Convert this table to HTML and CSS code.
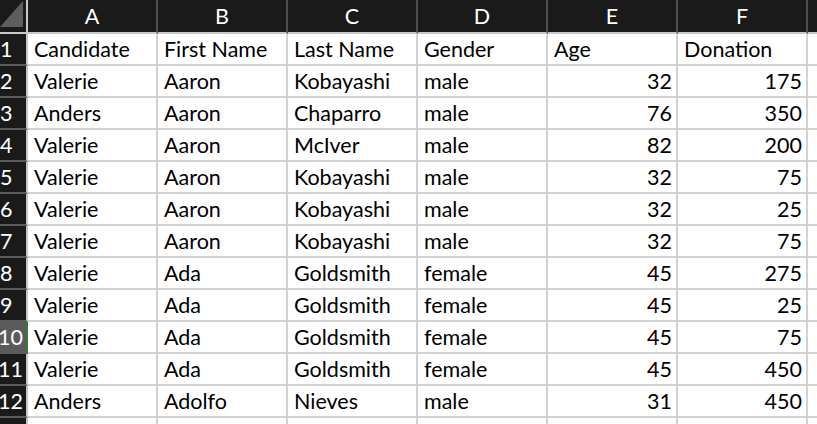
FILE: index.html
```html
<!DOCTYPE html>
<html>
<head>
<meta charset="utf-8">
<link rel="stylesheet" href="styles.css">
</head>
<body>
<div class="sheet">
  <div class="row head">
    <div class="corner"><svg width="26" height="32" viewBox="0 0 26 32"><polygon points="0,27 23,1 23,27" fill="#5e5e5e"/></svg></div>
    <div class="ch">A</div><div class="ch">B</div><div class="ch">C</div><div class="ch">D</div><div class="ch">E</div><div class="ch">F</div><div class="ch last"></div>
  </div>
  <div class="row"><div class="rh">1</div><div class="c">Candidate</div><div class="c">First Name</div><div class="c">Last Name</div><div class="c">Gender</div><div class="c">Age</div><div class="c">Donation</div><div class="c"></div></div>
  <div class="row"><div class="rh">2</div><div class="c">Valerie</div><div class="c">Aaron</div><div class="c">Kobayashi</div><div class="c">male</div><div class="c n">32</div><div class="c n">175</div><div class="c"></div></div>
  <div class="row"><div class="rh">3</div><div class="c">Anders</div><div class="c">Aaron</div><div class="c">Chaparro</div><div class="c">male</div><div class="c n">76</div><div class="c n">350</div><div class="c"></div></div>
  <div class="row"><div class="rh">4</div><div class="c">Valerie</div><div class="c">Aaron</div><div class="c">McIver</div><div class="c">male</div><div class="c n">82</div><div class="c n">200</div><div class="c"></div></div>
  <div class="row"><div class="rh">5</div><div class="c">Valerie</div><div class="c">Aaron</div><div class="c">Kobayashi</div><div class="c">male</div><div class="c n">32</div><div class="c n">75</div><div class="c"></div></div>
  <div class="row"><div class="rh">6</div><div class="c">Valerie</div><div class="c">Aaron</div><div class="c">Kobayashi</div><div class="c">male</div><div class="c n">32</div><div class="c n">25</div><div class="c"></div></div>
  <div class="row"><div class="rh">7</div><div class="c">Valerie</div><div class="c">Aaron</div><div class="c">Kobayashi</div><div class="c">male</div><div class="c n">32</div><div class="c n">75</div><div class="c"></div></div>
  <div class="row"><div class="rh">8</div><div class="c">Valerie</div><div class="c">Ada</div><div class="c">Goldsmith</div><div class="c">female</div><div class="c n">45</div><div class="c n">275</div><div class="c"></div></div>
  <div class="row"><div class="rh">9</div><div class="c">Valerie</div><div class="c">Ada</div><div class="c">Goldsmith</div><div class="c">female</div><div class="c n">45</div><div class="c n">25</div><div class="c"></div></div>
  <div class="row"><div class="rh two sel">10</div><div class="c">Valerie</div><div class="c">Ada</div><div class="c">Goldsmith</div><div class="c">female</div><div class="c n">45</div><div class="c n">75</div><div class="c"></div></div>
  <div class="row"><div class="rh two">11</div><div class="c">Valerie</div><div class="c">Ada</div><div class="c">Goldsmith</div><div class="c">female</div><div class="c n">45</div><div class="c n">450</div><div class="c"></div></div>
  <div class="row"><div class="rh two">12</div><div class="c">Anders</div><div class="c">Adolfo</div><div class="c">Nieves</div><div class="c">male</div><div class="c n">31</div><div class="c n">450</div><div class="c"></div></div>
  <div class="row"><div class="rh two">13</div><div class="c"></div><div class="c"></div><div class="c"></div><div class="c"></div><div class="c n"></div><div class="c n"></div><div class="c"></div></div>
</div>
</body>
</html>
```
FILE: styles.css
```css
html, body {
  margin: 0;
  padding: 0;
  background: #ffffff;
  overflow: hidden;
}
.sheet {
  width: 817px;
  height: 424px;
  overflow: hidden;
  font-family: Lato, "Liberation Sans", sans-serif;
  font-size: 21.5px;
}
.row {
  display: grid;
  grid-template-columns: 28px repeat(6, 130px) 1fr;
  height: 32px;
}
.row.head {
  height: 34px;
}
.row > div {
  box-sizing: border-box;
  overflow: hidden;
  white-space: nowrap;
}
.corner {
  background: #1a1a1a;
  border-right: 2px solid #c8c8c8;
  border-bottom: 2px solid #c8c8c8;
}
.corner svg {
  display: block;
}
.ch {
  background: #1a1a1a;
  color: #ffffff;
  text-align: center;
  line-height: 32px;
  border-right: 2px solid #4e4e4e;
  border-bottom: 2px solid #c8c8c8;
}
.ch.last {
  border-right: none;
}
.rh {
  background: #1a1a1a;
  color: #ffffff;
  line-height: 31px;
  border-right: 2px solid #c8c8c8;
  border-bottom: 2px solid #5c5c5c;
  padding-left: 0;
}
.rh.two {
  text-indent: -2px;
}
.rh.sel {
  background: #5a5a5a;
  border-right-color: #2e7d3a;
}
.c {
  color: #000000;
  line-height: 31px;
  padding: 0 6px;
  border-right: 2px solid #d2d2d2;
  border-bottom: 2px solid #d2d2d2;
}
.c.n {
  text-align: right;
  padding-right: 4px;
}
```
